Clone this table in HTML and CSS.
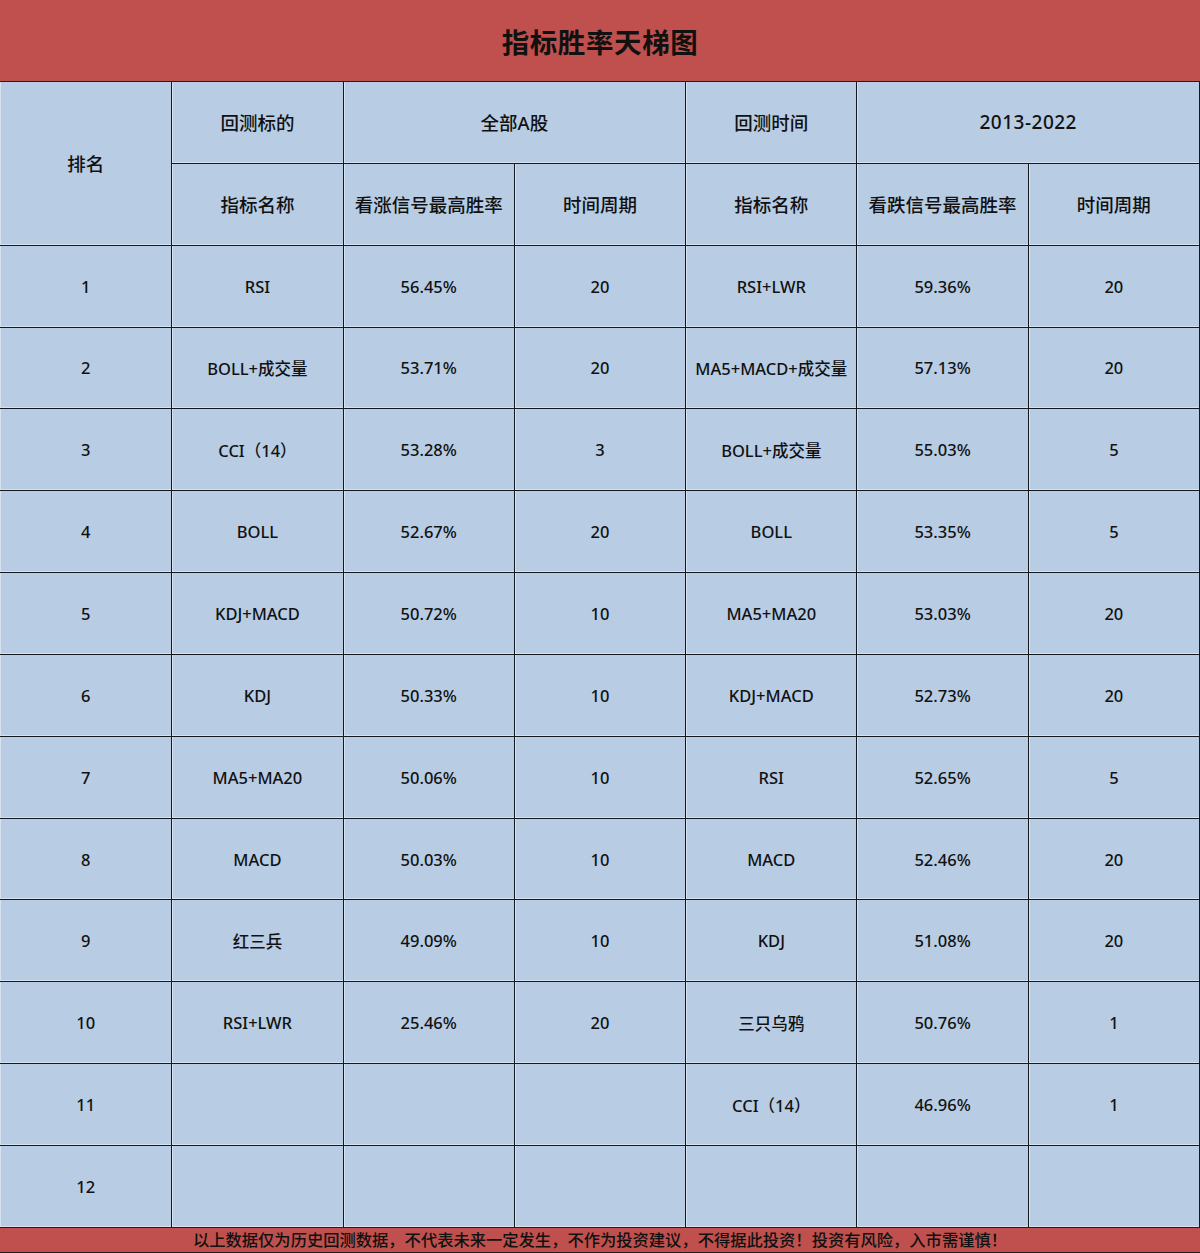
FILE: index.html
```html
<!DOCTYPE html>
<html lang="zh-CN">
<head>
<meta charset="utf-8">
<title>指标胜率天梯图</title>
<link rel="stylesheet" href="styles.css">
</head>
<body>
<div class="page">
  <div class="title">指标胜率天梯图</div>
  <div class="grid">
    <div class="cell head rank">排名</div>
    <div class="cell head">回测标的</div>
    <div class="cell head span2">全部A股</div>
    <div class="cell head">回测时间</div>
    <div class="cell head span2 year">2013-2022</div>
    <div class="cell head">指标名称</div>
    <div class="cell head">看涨信号最高胜率</div>
    <div class="cell head">时间周期</div>
    <div class="cell head">指标名称</div>
    <div class="cell head">看跌信号最高胜率</div>
    <div class="cell head">时间周期</div>

    <div class="cell">1</div><div class="cell">RSI</div><div class="cell">56.45%</div><div class="cell">20</div><div class="cell">RSI+LWR</div><div class="cell">59.36%</div><div class="cell">20</div>
    <div class="cell">2</div><div class="cell">BOLL+成交量</div><div class="cell">53.71%</div><div class="cell">20</div><div class="cell">MA5+MACD+成交量</div><div class="cell">57.13%</div><div class="cell">20</div>
    <div class="cell">3</div><div class="cell">CCI（14）</div><div class="cell">53.28%</div><div class="cell">3</div><div class="cell">BOLL+成交量</div><div class="cell">55.03%</div><div class="cell">5</div>
    <div class="cell">4</div><div class="cell">BOLL</div><div class="cell">52.67%</div><div class="cell">20</div><div class="cell">BOLL</div><div class="cell">53.35%</div><div class="cell">5</div>
    <div class="cell">5</div><div class="cell">KDJ+MACD</div><div class="cell">50.72%</div><div class="cell">10</div><div class="cell">MA5+MA20</div><div class="cell">53.03%</div><div class="cell">20</div>
    <div class="cell">6</div><div class="cell">KDJ</div><div class="cell">50.33%</div><div class="cell">10</div><div class="cell">KDJ+MACD</div><div class="cell">52.73%</div><div class="cell">20</div>
    <div class="cell">7</div><div class="cell">MA5+MA20</div><div class="cell">50.06%</div><div class="cell">10</div><div class="cell">RSI</div><div class="cell">52.65%</div><div class="cell">5</div>
    <div class="cell">8</div><div class="cell">MACD</div><div class="cell">50.03%</div><div class="cell">10</div><div class="cell">MACD</div><div class="cell">52.46%</div><div class="cell">20</div>
    <div class="cell">9</div><div class="cell">红三兵</div><div class="cell">49.09%</div><div class="cell">10</div><div class="cell">KDJ</div><div class="cell">51.08%</div><div class="cell">20</div>
    <div class="cell">10</div><div class="cell">RSI+LWR</div><div class="cell">25.46%</div><div class="cell">20</div><div class="cell">三只乌鸦</div><div class="cell">50.76%</div><div class="cell">1</div>
    <div class="cell">11</div><div class="cell"></div><div class="cell"></div><div class="cell"></div><div class="cell">CCI（14）</div><div class="cell">46.96%</div><div class="cell">1</div>
    <div class="cell">12</div><div class="cell"></div><div class="cell"></div><div class="cell"></div><div class="cell"></div><div class="cell"></div><div class="cell"></div>
  </div>
  <div class="footer">以上数据仅为历史回测数据，不代表未来一定发生，不作为投资建议，不得据此投资！投资有风险，入市需谨慎！</div>
</div>
</body>
</html>
```

FILE: styles.css
```css
html, body {
  margin: 0;
  padding: 0;
  background: #ffffff;
}
body {
  font-family: "Noto Sans", "Noto Sans CJK SC", sans-serif;
  color: #111111;
}
.page {
  width: 1200px;
  height: 1253px;
  overflow: hidden;
}
.title {
  height: 81px;
  background: #c0504d;
  border-bottom: 1px solid #1e1e1e;
  display: flex;
  align-items: center;
  justify-content: center;
  font-size: 27.5px;
  font-weight: 600;
  letter-spacing: 0.6px;
}
.grid {
  display: grid;
  grid-template-columns: repeat(7, 1fr);
  grid-auto-rows: 80.85px;
  gap: 1px;
  background: #15191d;
  padding-left: 1px;
  padding-right: 1px;
}
.cell {
  background: #b8cce4;
  display: flex;
  align-items: center;
  justify-content: center;
  font-size: 16.5px;
  font-weight: 500;
  box-shadow: inset 1px 0 0 #d6e2f0, inset 0 -1px 0 #d6e2f0;
  white-space: nowrap;
}
.rank {
  margin-left: -1px;
}
.grid > .cell:nth-child(7n+12) {
  margin-left: -1px;
}
.head {
  font-size: 18.5px;
  font-weight: 500;
}
.head.year {
  font-size: 19px;
  letter-spacing: 0.5px;
}
.rank {
  grid-row: span 2;
}
.span2 {
  grid-column: span 2;
}
.footer {
  height: 24px;
  background: #c0504d;
  border-top: 1px solid #1e1e1e;
  border-bottom: 1px solid #1e1e1e;
  display: flex;
  align-items: center;
  justify-content: center;
  font-size: 16.3px;
  font-weight: 500;
  line-height: 1;
}
```
